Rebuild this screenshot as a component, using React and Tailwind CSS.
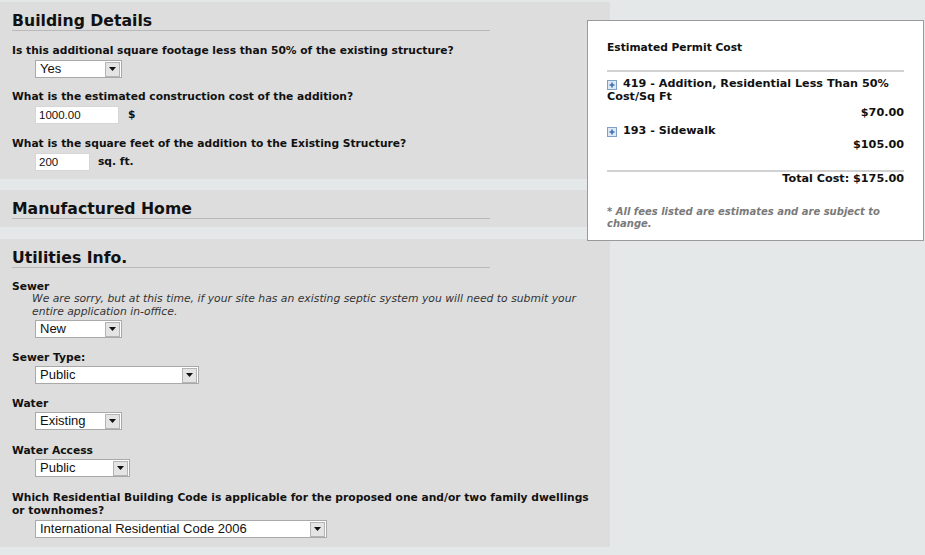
import React from "react";

function Arrow() {
  return (
    <div className="mr-[1px] flex h-[15px] w-[15px] shrink-0 items-center justify-center border border-[#b4b4b4] bg-[#e4e4e4]">
      <svg width="7" height="4" viewBox="0 0 7 4">
        <path d="M0 0H7L3.5 4Z" fill="#111" />
      </svg>
    </div>
  );
}

function Select({ value, className }) {
  return (
    <div
      className={
        "flex h-[18px] items-center border border-[#a9a9a9] bg-white font-['Liberation_Sans',Arial,sans-serif] text-[13px] leading-[16px] text-[#111] " +
        className
      }
    >
      <span className="flex-1 truncate pl-[4px]">{value}</span>
      <Arrow />
    </div>
  );
}

function TextBox({ value, className }) {
  return (
    <div
      className={
        "flex h-[18px] items-center border border-[#d6d6d6] bg-white pl-[3px] font-['Liberation_Sans',Arial,sans-serif] text-[11.5px] leading-[16px] text-[#111] " +
        className
      }
    >
      {value}
    </div>
  );
}

function Heading({ children }) {
  return (
    <div className="w-[478px] border-b border-[#b9b9b9] text-[15.7px] font-bold leading-[18px] text-[#111]">
      {children}
    </div>
  );
}

function Label({ children, className = "" }) {
  return (
    <div className={"text-[10.7px] font-bold leading-[13px] text-[#111] " + className}>
      {children}
    </div>
  );
}

function PlusIcon() {
  return (
    <span className="mr-[6px] inline-flex h-[10px] w-[10px] translate-y-[1px] items-center justify-center border border-[#7f9fc6] bg-[#dfe9f6] align-baseline">
      <svg width="6" height="6" viewBox="0 0 6 6">
        <path d="M3 0.5V5.5M0.5 3H5.5" stroke="#3d6fb0" strokeWidth="1.6" />
      </svg>
    </span>
  );
}

export default function App() {
  return (
    <div className="relative h-[555px] w-[925px] overflow-hidden bg-[#e5e8e9] font-['DejaVu_Sans',Verdana,sans-serif] text-[#111]">
      <div className="w-[610px] pt-[2px]">
        {/* Building Details */}
        <div className="h-[177px] bg-[#dddddd] pl-[12px] pt-[10px]">
          <Heading>Building Details</Heading>
          <Label className="mt-[13px]">
            Is this additional square footage less than 50% of the existing structure?
          </Label>
          <Select value="Yes" className="ml-[23px] mt-[3px] w-[87px]" />
          <Label className="mt-[12px]">What is the estimated construction cost of the addition?</Label>
          <div className="ml-[23px] mt-[3px] flex items-center">
            <TextBox value="1000.00" className="w-[84px]" />
            <span className="ml-[9px] text-[10.7px] font-bold">$</span>
          </div>
          <Label className="mt-[13px]">What is the square feet of the addition to the Existing Structure?</Label>
          <div className="ml-[23px] mt-[3px] flex items-center">
            <TextBox value="200" className="w-[55px]" />
            <span className="ml-[8px] text-[10.7px] font-bold">sq. ft.</span>
          </div>
        </div>

        {/* Manufactured Home */}
        <div className="mt-[11px] h-[37px] bg-[#dddddd] pl-[12px] pt-[10px]">
          <Heading>Manufactured Home</Heading>
        </div>

        {/* Utilities Info */}
        <div className="mt-[12px] h-[308px] bg-[#dddddd] pl-[12px] pt-[10px]">
          <Heading>Utilities Info.</Heading>
          <Label className="mt-[12px]">Sewer</Label>
          <div className="ml-[20px] w-[560px] text-[10.8px] italic leading-[12.7px] text-[#333]">
            We are sorry, but at this time, if your site has an existing septic system you will need to submit your entire application in-office.
          </div>
          <Select value="New" className="ml-[23px] mt-[2px] w-[87px]" />
          <Label className="mt-[13px]">Sewer Type:</Label>
          <Select value="Public" className="ml-[23px] mt-[2px] w-[164px]" />
          <Label className="mt-[13px]">Water</Label>
          <Select value="Existing" className="ml-[23px] mt-[2px] w-[87px]" />
          <Label className="mt-[14px]">Water Access</Label>
          <Select value="Public" className="ml-[23px] mt-[2px] w-[95px]" />
          <Label className="mt-[14px] w-[584px]">
            Which Residential Building Code is applicable for the proposed one and/or two family dwellings or townhomes?
          </Label>
          <Select value="International Residential Code 2006" className="ml-[23px] mt-[3px] w-[292px]" />
        </div>
      </div>

      {/* Estimated cost card */}
      <div className="absolute left-[587px] top-[20px] h-[221px] w-[337px] border border-[#9a9a9a] bg-white px-[19px] pt-[20px]">
        <div className="text-[10.7px] font-bold leading-[13px]">Estimated Permit Cost</div>
        <div className="mt-[16px] border-t-2 border-[#d2d2d2]" />
        <div className="mt-[5px] text-[11.2px] font-bold leading-[13.4px]">
          <PlusIcon />
          419 - Addition, Residential Less Than 50% Cost/Sq Ft
        </div>
        <div className="mt-[1px] text-right text-[11.2px] font-bold leading-[15px]">$70.00</div>
        <div className="mt-[4px] text-[11.2px] font-bold leading-[13.4px]">
          <PlusIcon />
          193 - Sidewalk
        </div>
        <div className="text-right text-[11.2px] font-bold leading-[15px]">$105.00</div>
        <div className="mt-[18px] border-t-2 border-[#d2d2d2]" />
        <div className="text-right text-[11.2px] font-bold leading-[13.4px]">Total Cost: $175.00</div>
        <div className="mt-[20px] text-[10px] font-bold italic leading-[12.7px] text-[#7a7a7a]">
          * All fees listed are estimates and are subject to change.
        </div>
      </div>
    </div>
  );
}
